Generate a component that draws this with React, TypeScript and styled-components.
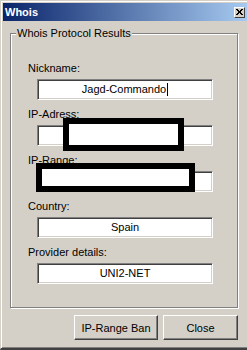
import React from "react";
import styled, { createGlobalStyle } from "styled-components";

const GlobalStyle = createGlobalStyle`
  html, body {
    margin: 0;
    padding: 0;
    background: #d4d0c8;
  }
  body {
    font-family: "Liberation Sans", Arial, sans-serif;
    font-size: 11px;
    color: #000;
  }
`;

const Window = styled.div`
  position: relative;
  box-sizing: border-box;
  width: 247px;
  height: 350px;
  padding: 2px 0 1px 2px;
  background: #d4d0c8;
  border-top: 1px solid #d4d0c8;
  border-left: 1px solid #d4d0c8;
  border-bottom: 2px solid #404040;
  box-shadow: inset 1px 1px 0 #fff, inset 0 -1px 0 #808080;
  display: flex;
  flex-direction: column;
`;

const TitleBar = styled.div`
  height: 18px;
  display: flex;
  align-items: center;
  justify-content: space-between;
  padding: 0 2px 0 2px;
  background: linear-gradient(to right, #0a246a, #a6caf0);
`;

const Title = styled.span`
  color: #fff;
  font-weight: bold;
  font-size: 11px;
  line-height: 13px;
`;

const CloseBox = styled.div`
  box-sizing: border-box;
  width: 11px;
  height: 11px;
  background: #d4d0c8;
  border: 1px solid;
  border-color: #fff #404040 #404040 #fff;
  display: flex;
  align-items: center;
  justify-content: center;
`;

const Body = styled.div`
  flex: 1;
  display: flex;
  flex-direction: column;
  padding: 6px 9px 7px 7px;
`;

const Group = styled.fieldset`
  flex: 1;
  margin: 0;
  padding: 0;
  min-width: 0;
  border: 1px solid #808080;
  box-shadow: 1px 1px 0 #fff, inset 1px 1px 0 #fff;
`;

const Legend = styled.legend`
  margin-left: 5px;
  padding: 0 1px;
  line-height: 13px;
  background: #d4d0c8;
`;

const Fields = styled.div`
  display: flex;
  flex-direction: column;
  gap: 8px;
  padding: 22px 0 0 17px;
`;

const Field = styled.div`
  display: flex;
  flex-direction: column;
  gap: 4px;
`;

const Label = styled.div`
  line-height: 13px;
`;

const TextBox = styled.div`
  box-sizing: border-box;
  width: 176px;
  height: 21px;
  margin-left: 9px;
  background: #fff;
  border: 1px solid;
  border-color: #808080 #fff #fff #808080;
  box-shadow: inset 1px 1px 0 #404040, inset -1px -1px 0 #d4d0c8;
  display: flex;
  align-items: center;
  justify-content: center;
  line-height: 13px;
`;

const Caret = styled.span`
  display: inline-block;
  width: 1px;
  height: 13px;
  background: #000;
  margin-left: 1px;
`;

const Buttons = styled.div`
  display: flex;
  justify-content: flex-end;
  gap: 5px;
  margin-top: 7px;
`;

const Button = styled.button<{ $w: number }>`
  box-sizing: border-box;
  width: ${(p) => p.$w}px;
  height: 25px;
  padding: 0;
  font-family: "Liberation Sans", Arial, sans-serif;
  font-size: 11px;
  color: #000;
  background: #d4d0c8;
  border: 1px solid;
  border-color: #fff #404040 #404040 #fff;
  box-shadow: inset -1px -1px 0 #808080;
`;

const Redact = styled.div<{ $x: number; $y: number; $w: number; $h: number }>`
  position: absolute;
  box-sizing: border-box;
  left: ${(p) => p.$x}px;
  top: ${(p) => p.$y}px;
  width: ${(p) => p.$w}px;
  height: ${(p) => p.$h}px;
  background: #fff;
  border: 6px solid #000;
`;

const fields = [
  { label: "Nickname:", value: "Jagd-Commando", caret: true },
  { label: "IP-Adress:", value: "" },
  { label: "IP-Range:", value: "" },
  { label: "Country:", value: "Spain" },
  { label: "Provider details:", value: "UNI2-NET" },
];

export default function App() {
  return (
    <Window>
      <GlobalStyle />
      <TitleBar>
        <Title>Whois</Title>
        <CloseBox>
          <svg width="7" height="6" viewBox="0 0 7 6" shapeRendering="crispEdges">
            <path
              d="M0 0h2v1h-2zM5 0h2v1h-2zM1 1h2v1h-2zM4 1h2v1h-2zM2 2h3v2h-3zM1 4h2v1h-2zM4 4h2v1h-2zM0 5h2v1h-2zM5 5h2v1h-2z"
              fill="#000"
            />
          </svg>
        </CloseBox>
      </TitleBar>
      <Body>
        <Group>
          <Legend>Whois Protocol Results</Legend>
          <Fields>
            {fields.map((f) => (
              <Field key={f.label}>
                <Label>{f.label}</Label>
                <TextBox>
                  {f.value}
                  {f.caret && <Caret />}
                </TextBox>
              </Field>
            ))}
          </Fields>
        </Group>
        <Buttons>
          <Button $w={84}>IP-Range Ban</Button>
          <Button $w={75}>Close</Button>
        </Buttons>
      </Body>
      <Redact $x={62} $y={117} $w={121} $h={33} />
      <Redact $x={35} $y={162} $w={159} $h={29} />
    </Window>
  );
}
